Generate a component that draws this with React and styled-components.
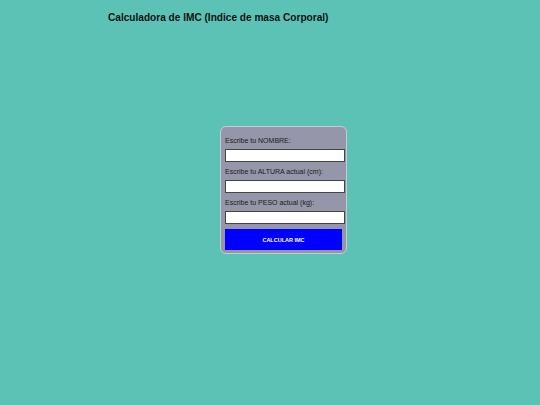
import React from "react";
import styled, { createGlobalStyle } from "styled-components";

const GlobalStyle = createGlobalStyle`
	html, body {
		margin: 0;
		padding: 0;
		background: #5cc2b5;
		font-family: "Liberation Sans", Arial, sans-serif;
	}
`;

const Page = styled.div`
	width: 540px;
	height: 405px;
	display: flex;
	flex-direction: column;
`;

const Title = styled.h1`
	margin: 12px 0 0 108px;
	font-size: 10.1px;
	font-weight: bold;
	color: #111;
`;

const Card = styled.form`
	margin: 103px 0 0 220px;
	width: 127px;
	box-sizing: border-box;
	padding: 9px 2px 3px 4px;
	background: #9596a9;
	border: 1px solid #c9cbd3;
	border-radius: 6px;
	display: flex;
	flex-direction: column;
`;

const Label = styled.label`
	font-size: 7px;
	color: #1a1a1a;
	line-height: 9px;
	margin-bottom: 4px;
`;

const Input = styled.input`
	width: 120px;
	height: 13px;
	box-sizing: border-box;
	margin: 0 0 5px;
	padding: 0;
	border: 1px solid #444;
	background: #fff;
`;

const Button = styled.button`
	width: 117px;
	height: 21px;
	margin: 0;
	border: none;
	background: #0000ff;
	color: #fff;
	font-family: "Liberation Sans", Arial, sans-serif;
	font-size: 5.5px;
	font-weight: bold;
	cursor: pointer;
`;

const App = () => {
	return (
		<Page>
			<GlobalStyle />
			<Title>Calculadora de IMC (Indice de masa Corporal)</Title>
			<Card onSubmit={(e) => e.preventDefault()}>
				<Label>Escribe tu NOMBRE:</Label>
				<Input type="text" />
				<Label>Escribe tu ALTURA actual (cm):</Label>
				<Input type="number" />
				<Label>Escribe tu PESO actual (kg):</Label>
				<Input type="number" />
				<Button type="submit">CALCULAR IMC</Button>
			</Card>
		</Page>
	);
};

export default App;
